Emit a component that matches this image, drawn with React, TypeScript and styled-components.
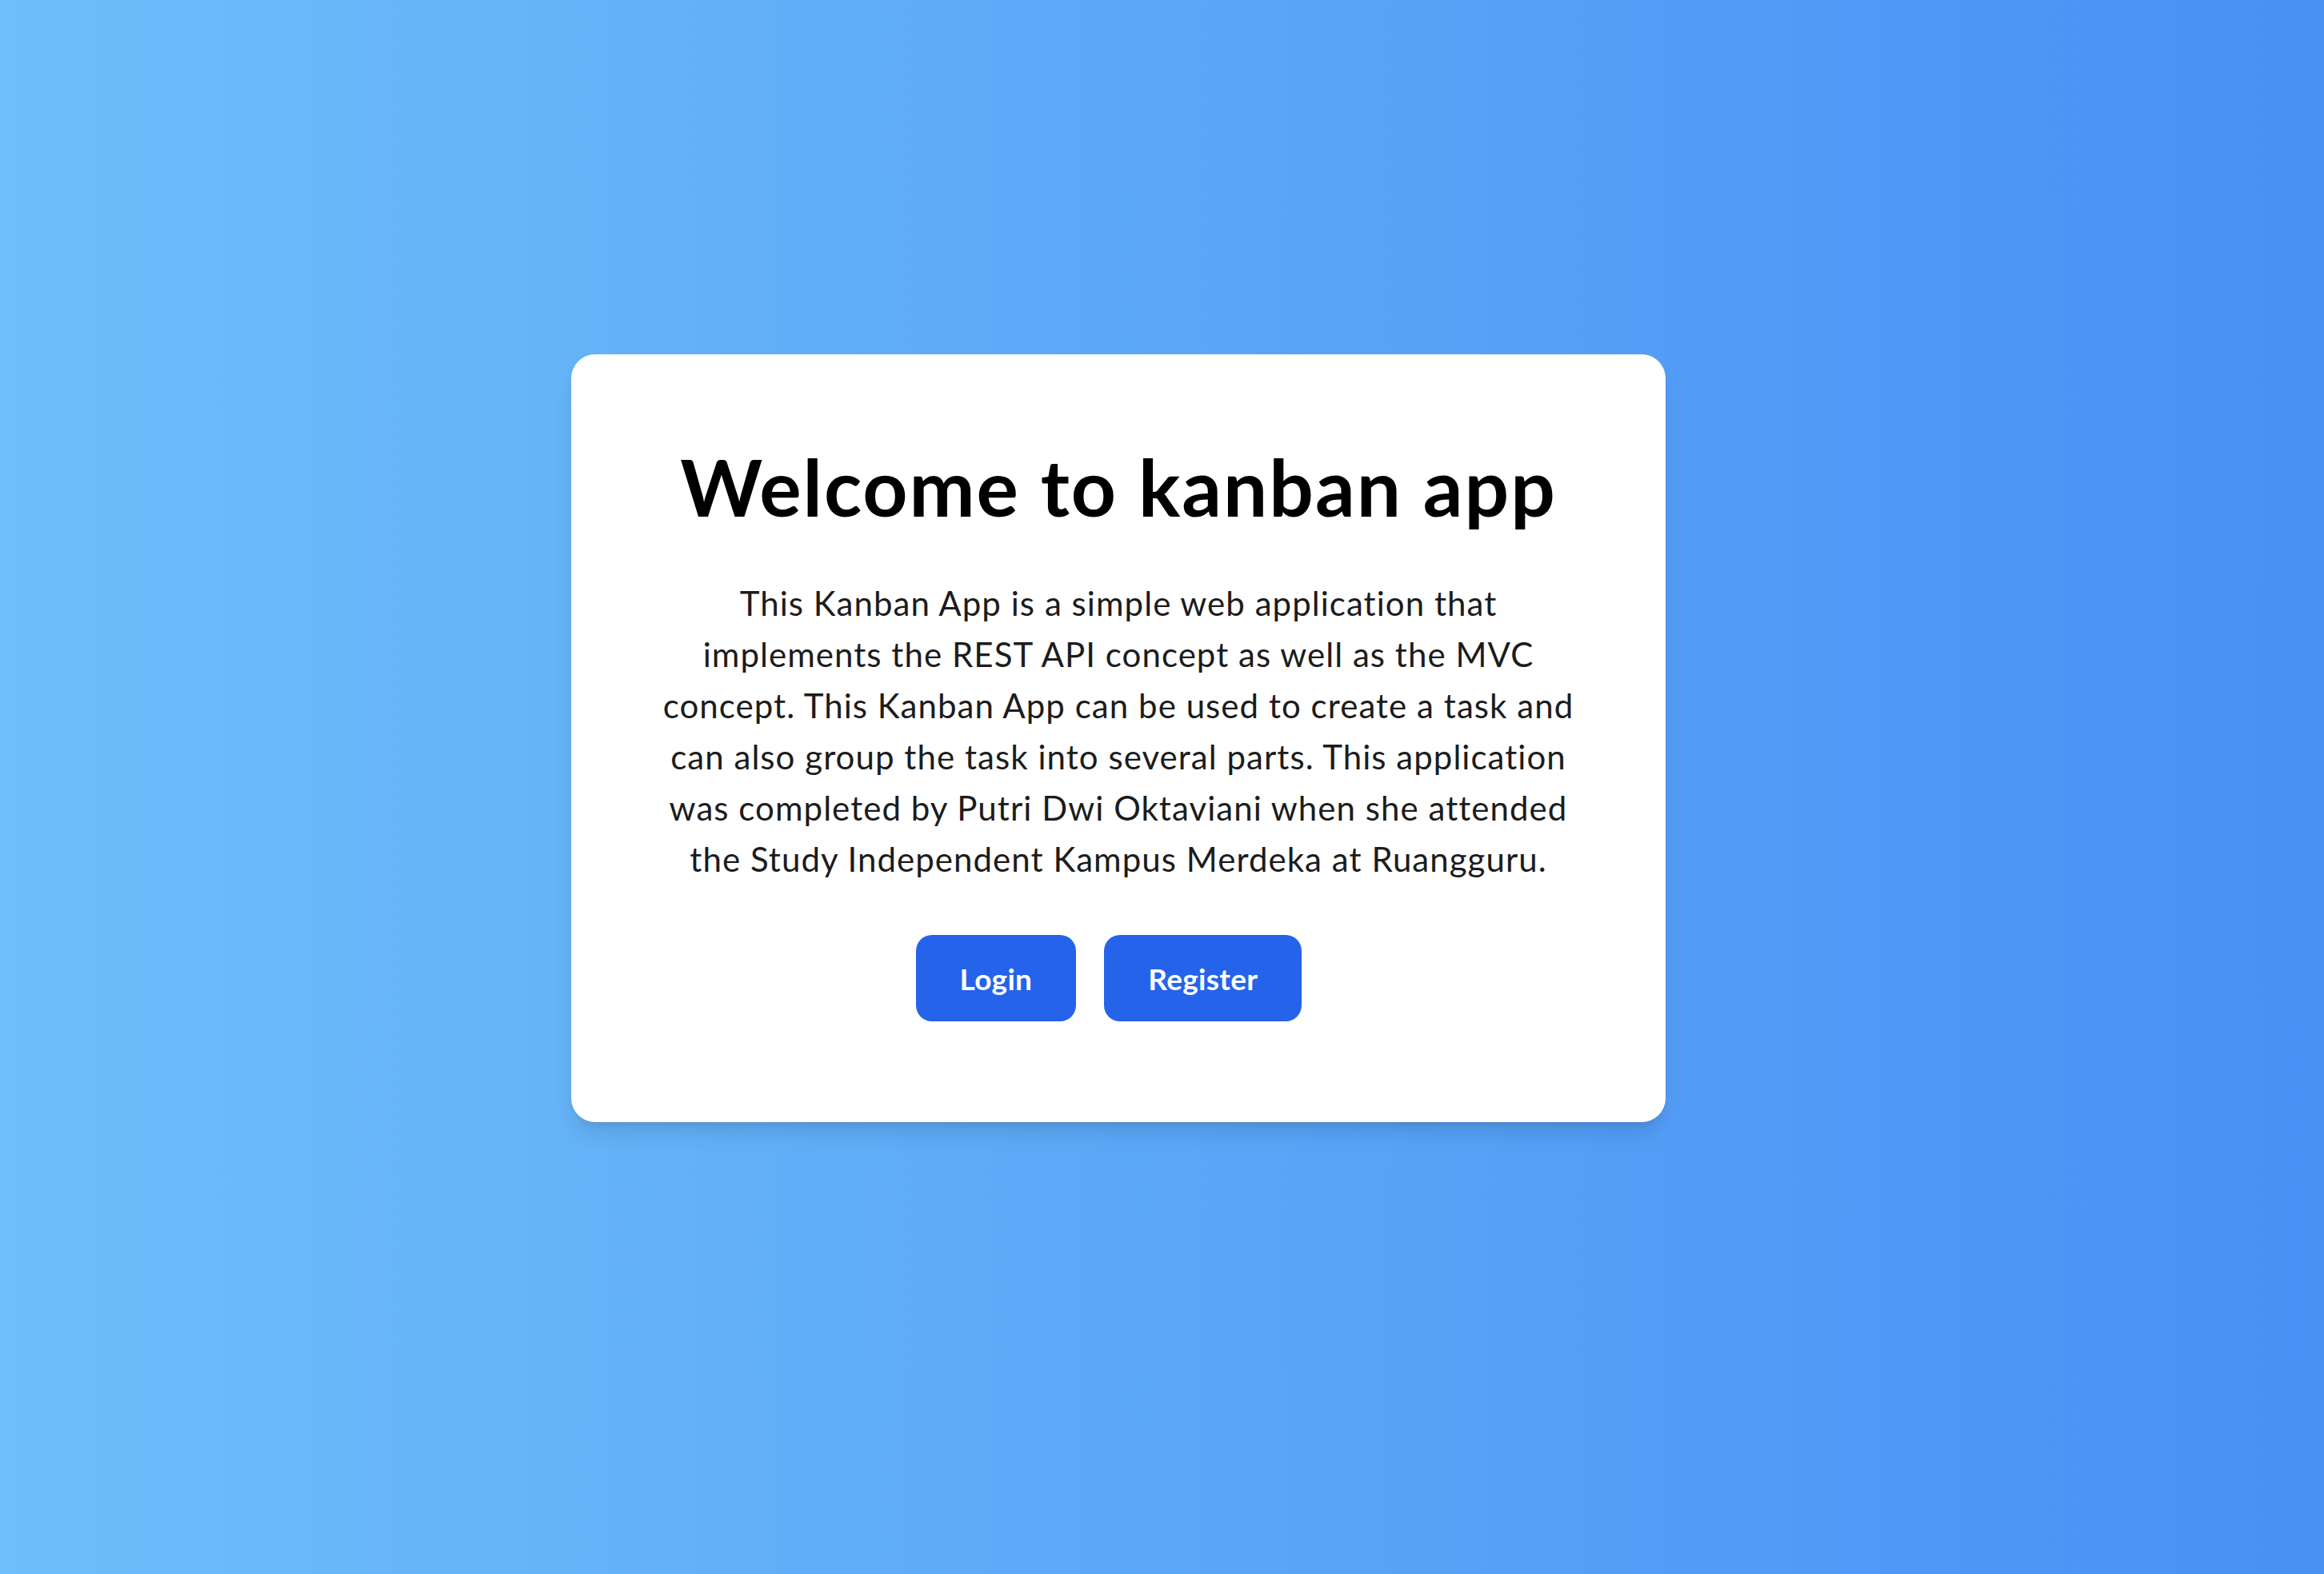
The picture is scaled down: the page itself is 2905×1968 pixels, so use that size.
import React from "react";
import styled, { createGlobalStyle } from "styled-components";

const Global = createGlobalStyle`
  html, body { margin: 0; padding: 0; }
  body { font-family: Lato, "Noto Sans", sans-serif; }
  * { box-sizing: border-box; }
`;

const Page = styled.main`
  min-height: 1968px;
  width: 100%;
  background: linear-gradient(to right, #6ebefa 0%, #4990f5 100%);
  display: flex;
  align-items: flex-start;
  justify-content: flex-start;
  padding: 443px 0 0 714px;
`;

const Card = styled.section`
  width: 1368px;
  background: #ffffff;
  border-radius: 30px;
  box-shadow: 0 18px 28px -6px rgba(0, 0, 0, 0.12), 0 7px 11px -7px rgba(0, 0, 0, 0.1);
  padding: 107px 40px 126px;
  display: flex;
  flex-direction: column;
  align-items: center;
`;

const Title = styled.h1`
  margin: 0;
  font-family: Lato, "Noto Sans", sans-serif;
  font-weight: 700;
  font-size: 98px;
  line-height: 116px;
  letter-spacing: 2px;
  color: #000000;
  text-align: center;
  white-space: nowrap;
`;

const Description = styled.p`
  margin: 56px 0 0;
  font-family: Lato, "Noto Sans", sans-serif;
  font-weight: 400;
  font-size: 42px;
  line-height: 64px;
  letter-spacing: 1.05px;
  color: #1c1c1c;
  text-align: center;
  white-space: nowrap;
`;

const Actions = styled.div`
  margin-top: 63px;
  display: flex;
  justify-content: center;
  gap: 35px;
  padding-right: 24px;
  align-self: stretch;
`;

const Button = styled.button`
  height: 108px;
  padding: 0 55px;
  border: none;
  border-radius: 20px;
  background: #2563eb;
  color: #ffffff;
  font-family: Lato, "Noto Sans", sans-serif;
  font-weight: 700;
  font-size: 37px;
  letter-spacing: 0.3px;
  display: flex;
  align-items: center;
  justify-content: center;
  cursor: pointer;
`;

export default function App() {
  return (
    <>
      <Global />
      <Page>
        <Card>
          <Title>Welcome to kanban app</Title>
          <Description>
            This Kanban App is a simple web application that
            <br />
            implements the REST API concept as well as the MVC
            <br />
            concept. This Kanban App can be used to create a task and
            <br />
            can also group the task into several parts. This application
            <br />
            was completed by Putri Dwi Oktaviani when she attended
            <br />
            the Study Independent Kampus Merdeka at Ruangguru.
          </Description>
          <Actions>
            <Button>Login</Button>
            <Button>Register</Button>
          </Actions>
        </Card>
      </Page>
    </>
  );
}
